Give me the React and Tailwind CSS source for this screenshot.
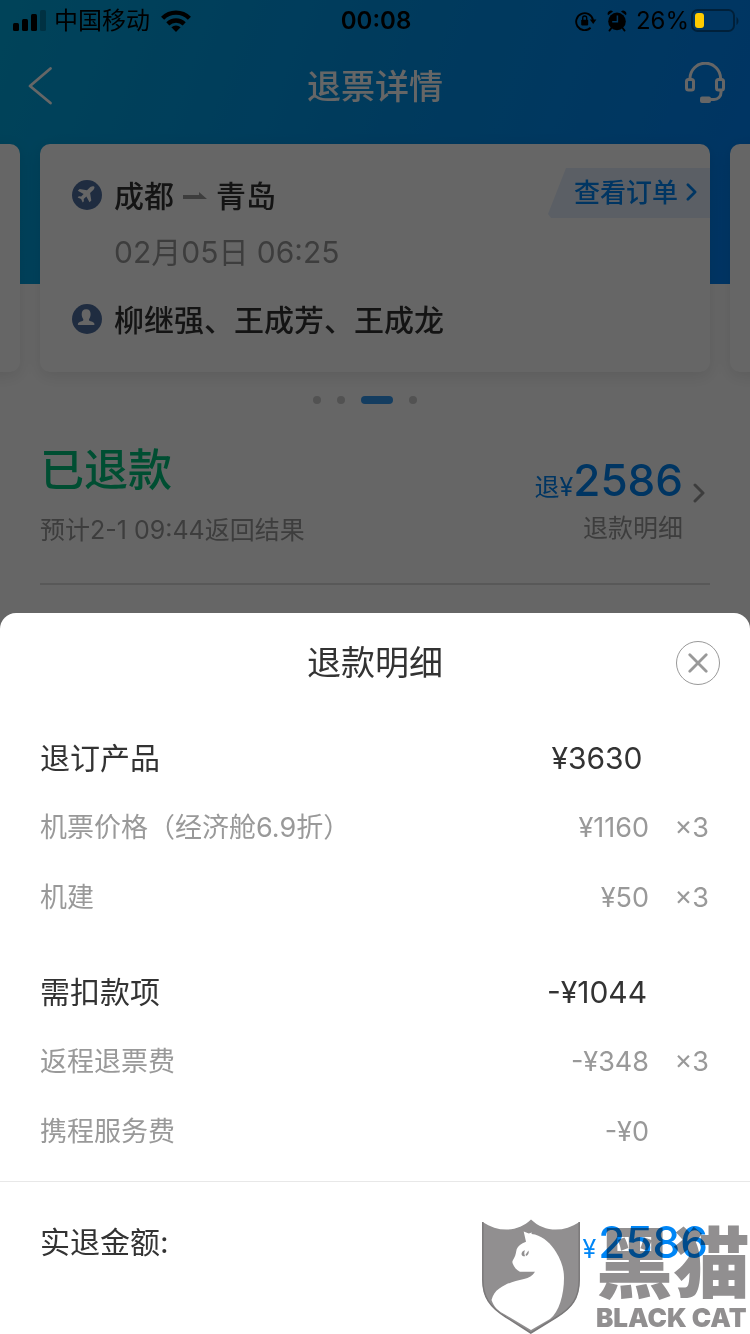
import React from "react";

const sections = [
  {
    name: "退订产品",
    amount: "¥3630",
    items: [
      { name: "机票价格（经济舱6.9折）", amount: "¥1160", qty: "×3" },
      { name: "机建", amount: "¥50", qty: "×3" },
    ],
  },
  {
    name: "需扣款项",
    amount: "-¥1044",
    items: [
      { name: "返程退票费", amount: "-¥348", qty: "×3" },
      { name: "携程服务费", amount: "-¥0", qty: "" },
    ],
  },
];

function Signal() {
  return (
    <svg viewBox="0 0 34 22" className="h-[22px] w-[34px]" aria-hidden="true">
      <rect x="0" y="13" width="6" height="8" rx="1.5" />
      <rect x="9" y="9" width="6" height="12" rx="1.5" />
      <rect x="18" y="4" width="6" height="17" rx="1.5" />
      <rect x="27" y="0" width="6" height="21" rx="1.5" opacity="0.25" />
    </svg>
  );
}

function Wifi() {
  return (
    <svg viewBox="0 0 30 22" className="h-[22px] w-[30px]" aria-hidden="true">
      <g fill="none" stroke="currentColor" strokeWidth="4.4">
        <path d="M1.6 8.2a19 19 0 0 1 26.800 0" />
        <path d="M6.800 13.800a11.800 11.800 0 0 1 16.400 0" />
      </g>
      <path d="M10.400 17.300a7 7 0 0 1 9.200 0L15 22z" />
    </svg>
  );
}

function RotationLock() {
  return (
    <svg viewBox="0 0 22 20" className="h-5 w-[22px]" aria-hidden="true">
      <path d="M15.6 16.8A8.5 8.5 0 1 1 18 9" fill="none" stroke="currentColor" strokeWidth="1.9" />
      <path d="M14.8 8.4h6.6L18.2 13z" />
      <rect x="6.2" y="8.8" width="7" height="5.6" rx="0.8" />
      <path d="M7.7 9V7a2 2 0 0 1 4 0v2" fill="none" stroke="currentColor" strokeWidth="1.4" />
    </svg>
  );
}

function Alarm() {
  return (
    <svg viewBox="0 0 20 22" className="h-[22px] w-5" aria-hidden="true">
      <circle cx="10" cy="11.400" r="8.800" />
      <path d="M1 5.200A3.200 3.200 0 0 1 6 1.400zM19 5.200A3.200 3.200 0 0 0 14 1.400z" />
      <path d="M4.400 18l-2 2.600M15.600 18l2 2.600" stroke="currentColor" strokeWidth="1.800" strokeLinecap="round" />
      <path d="M10.400 5.600v6.200H5.200" fill="none" stroke="#003861" strokeWidth="1.500" />
    </svg>
  );
}

function Battery() {
  return (
    <svg viewBox="0 0 48 24" className="h-6 w-12" aria-hidden="true">
      <rect x="1" y="1" width="42" height="21" rx="5.5" fill="none" stroke="#000" strokeOpacity="0.4" strokeWidth="2" />
      <path d="M45.5 8v8c2.6-1.4 2.6-6.6 0-8z" opacity="0.4" />
      <rect x="4" y="4" width="9" height="15" rx="3" fill="#ffcc00" />
    </svg>
  );
}

function StatusBar() {
  return (
    <div className="relative z-20 grid h-10 grid-cols-[1fr_auto_1fr] items-center pl-[13px] pr-[11px] pt-px text-2xl text-black">
      <div className="flex items-center">
        <Signal />
        <span className="ml-[7px] mr-[11px]">中国移动</span>
        <Wifi />
      </div>
      <span className="font-semibold">00:08</span>
      <div className="flex items-center justify-end">
        <RotationLock />
        <span className="ml-[10px] mr-[9px]">
          <Alarm />
        </span>
        <span className="mr-[2px]">26%</span>
        <Battery />
      </div>
    </div>
  );
}

function Chevron({ className }) {
  return (
    <svg viewBox="0 0 12 20" className={className} fill="none" stroke="currentColor" strokeWidth="3" strokeLinecap="round" strokeLinejoin="round" aria-hidden="true">
      <path d="M2 2l8 8-8 8" />
    </svg>
  );
}

function NavBar() {
  return (
    <header className="grid h-[94px] grid-cols-[1fr_auto_1fr] items-center px-6 text-white">
      <button type="button" aria-label="返回" className="justify-self-start pb-[2px]">
        <svg viewBox="0 0 30 40" className="h-10 w-[30px]" fill="none" stroke="currentColor" strokeWidth="2.800" strokeLinecap="round" strokeLinejoin="round">
          <path d="M26.500 2.500L6 20l20.500 17" />
        </svg>
      </button>
      <h1 className="text-[34px] font-medium leading-[48px]">退票详情</h1>
      <button type="button" aria-label="客服" className="justify-self-end pb-2">
        <svg viewBox="0 0 42 42" className="h-[42px] w-[42px]" fill="none" stroke="currentColor" strokeWidth="3">
          <path d="M6 17.500v-1a15.300 15.300 0 0 1 30.600 0v1" />
          <rect x="2.500" y="17.500" width="7" height="10.500" rx="2" />
          <rect x="32.500" y="17.500" width="7" height="10.500" rx="2" />
          <path d="M37 28v2.500a7 7 0 0 1-7 7h-4" />
          <rect x="16" y="34.500" width="11" height="6.500" rx="2" fill="currentColor" stroke="none" />
        </svg>
      </button>
    </header>
  );
}

const cardClass = "h-[228px] w-[calc(100%-80px)] shrink-0 rounded-[10px] bg-white shadow-[0_4px_16px_rgba(0,0,0,0.1)]";

function TripCard() {
  return (
    <article className={cardClass + " relative px-8 pt-6 text-[30px] text-[#333]"}>
      <div className="flex h-14 items-center gap-3">
        <svg viewBox="0 0 30 30" className="mb-[2px] h-[30px] w-[30px]" aria-hidden="true">
          <circle cx="15" cy="15" r="15" fill="#4f6fa0" />
          <path d="M22.300 6.700c-1.500-1.100-3.600-.2-5 1.200l-2.300 2.300-7.400-1.300-1.800 1.800 5.800 3.200-2.400 2.700-2.400-.3-1.100 1.200 3.400 1.600 1.600 3.300 1.200-1.100-.2-2.400 2.700-2.300 3.100 5.600 1.800-1.800-1.200-7.300 2.300-2.300c1.300-1.300 2.600-2.900 1.900-4.400z" fill="#fff" />
        </svg>
        <span className="flex items-center gap-[9px] font-medium">
          成都
          <svg viewBox="0 0 24 8" className="h-2 w-6" fill="#999" role="img" aria-label="至">
            <path d="M0 3h16V0l8 7H0z" />
          </svg>
          青岛
        </span>
      </div>
      <p className="flex h-14 items-center pl-[42px] text-[#999]">02月05日 06:25</p>
      <div className="mt-3 flex h-14 items-center gap-3">
        <svg viewBox="0 0 30 30" className="mb-[2px] h-[30px] w-[30px]" aria-hidden="true">
          <circle cx="15" cy="15" r="15" fill="#4f6fa0" />
          <path d="M14.200 5.200c3 0 4.400 2 4.400 4.800 0 2.200-.6 3.700-1.500 4.900-.5 1.500.3 2 1.600 2.400 2.400.6 3.800 1.400 3.800 3.300 0 .3-.2.500-.6.500H6.400c-.4 0-.6-.2-.6-.5 0-1.900 1.500-2.700 3.900-3.300 1.300-.4 2-1 1.500-2.400-.9-1.200-1.500-2.700-1.500-4.900 0-2.800 1.500-4.800 4.500-4.800z" fill="#fff" />
        </svg>
        <span className="font-medium">柳继强、王成芳、王成龙</span>
      </div>
      <button type="button" className="absolute right-0 top-6 flex h-[50px] items-center gap-2 bg-[#e4eefc] pb-[2px] pl-[26px] pr-[13px] text-[26px] font-medium text-[#0086f6] [clip-path:polygon(18px_0,100%_0,100%_100%,3px_100%,0_46px)]">
        查看订单
        <Chevron className="h-[18px] w-[11px]" />
      </button>
    </article>
  );
}

function Carousel() {
  return (
    <section>
      <div className="flex justify-center gap-5 overflow-hidden pb-6 pt-[10px]">
        <div className={cardClass} />
        <TripCard />
        <div className={cardClass} />
      </div>
      <div className="flex justify-center gap-4 pr-5">
        <span className="h-2 w-2 rounded-full bg-[#ccc]" />
        <span className="h-2 w-2 rounded-full bg-[#ccc]" />
        <span className="h-2 w-8 rounded-full bg-[#3399f0]" />
        <span className="h-2 w-2 rounded-full bg-[#ccc]" />
      </div>
    </section>
  );
}

function RefundSummary() {
  return (
    <section className="mx-10 flex justify-between border-b-2 border-[#ddd] pb-[35px] pt-[34px]">
      <div>
        <h2 className="text-[44px] font-medium leading-[64px] text-[#00c37d]">已退款</h2>
        <p className="mt-[10px] text-[25px] leading-9 text-[#999]">预计2-1 09:44返回结果</p>
      </div>
      <button type="button" className="flex items-center gap-[10px] pr-[5px] text-right">
        <span>
          <span className="flex items-baseline justify-end pb-[2px] pt-3 text-[25px] leading-none text-[#0086f6]">
            退¥<span className="text-[44px] font-medium leading-[56px]">2586</span>
          </span>
          <span className="block text-[25px] leading-9 text-[#999]">退款明细</span>
        </span>
        <Chevron className="h-5 w-3 text-[#999]" />
      </button>
    </section>
  );
}

function RefundSheet() {
  return (
    <section role="dialog" aria-label="退款明细" className="absolute inset-x-0 bottom-0 z-20 rounded-t-2xl bg-white text-[#333]">
      <div className="grid h-[100px] grid-cols-[1fr_auto_1fr] items-center px-[30px]">
        <h2 className="col-start-2 text-[34px] leading-[48px]">退款明细</h2>
        <button type="button" aria-label="关闭" className="grid h-11 w-11 place-items-center justify-self-end rounded-full border border-[#999] text-[#999]">
          <svg viewBox="0 0 20 20" className="h-5 w-5" fill="none" stroke="currentColor" strokeWidth="2.800" strokeLinecap="round">
            <path d="M1.800 1.800l16.400 16.400M18.200 1.800L1.800 18.200" />
          </svg>
        </button>
      </div>
      <div className="px-10 pb-[14px] pt-[10px]">
        <table className="w-full table-fixed border-collapse">
          <colgroup>
            <col />
            <col className="w-[104px]" />
            <col className="w-[61px]" />
          </colgroup>
          {sections.map((section, i) => (
            <tbody key={section.name}>
              {i > 0 && (
                <tr className="h-6" aria-hidden="true">
                  <td colSpan={3} />
                </tr>
              )}
              <tr className="h-[70px] text-[30px] leading-10">
                <th scope="row" className="p-0 text-left font-normal">{section.name}</th>
                <td className="whitespace-nowrap p-0 text-center">{section.amount}</td>
                <td />
              </tr>
              {section.items.map((item) => (
                <tr key={item.name} className="h-[70px] text-[27px] leading-10 text-[#999]">
                  <th scope="row" className="p-0 text-left font-normal">{item.name}</th>
                  <td className="whitespace-nowrap p-0 text-right">{item.amount}</td>
                  <td className="p-0 pr-px text-right">{item.qty}</td>
                </tr>
              ))}
            </tbody>
          ))}
        </table>
      </div>
      <div className="flex h-[153px] items-start justify-between border-t border-[#e8e8e8] px-10 pt-[30px]">
        <span className="text-[30px] leading-[60px]">实退金额:</span>
        <span className="flex items-baseline gap-[2px] pr-[2px] text-[25px] leading-none text-[#0086f6]">
          ¥<span className="text-[44px] font-medium leading-[60px]">2586</span>
        </span>
      </div>
    </section>
  );
}

function Watermark() {
  return (
    <div className="pointer-events-none absolute bottom-0 right-0 z-30 flex items-end gap-4 text-[#918f90] mix-blend-multiply">
      <svg viewBox="0 0 98 115" className="h-[115px] w-[98px]" aria-hidden="true">
        <path
          fillRule="evenodd"
          d="M.5 3C17 14 36 13 49 .5 62 13 81 14 97.500 3v58c0 22-12 31-24 38L49 114 25 98C9 88 .5 80 .5 61zM9.500 81C12 88 16 92 22 95l27 16 19-11C77 93 82 76 82 59c0-10-3-18-8-26C69 25 62 18 53 15.500L49.500 15l.3-1.500-3 1-5.100-2L44 22.700c-5 2-8 4-9.300 7.500-.9 3-.6 5.500-2.700 9-1.500 2.300-1.900 3.500-1.400 5 1.500 4 4 7 7.400 8.500H53c-2.500 4-6 6-11 7.300-9 2-17 4-24.700 9.500C13 72.500 11 76 9.500 81z"
          fill="currentColor"
        />
        <path d="M.8 3v58c0 17 7 27 23 37l25 16 26-16c15-9 22.400-19 22.400-37V3" fill="none" stroke="#7a7879" strokeWidth="1.500" />
        <path d="M39.500 35c0-2 1.500-3.500 3.500-3.800-1 1.800-1 3.800.2 6-2 .3-3.500-.4-3.700-2.200z" fill="currentColor" />
        <path d="M43.500 35.800l3-4.300c.7 2.300-.2 4.300-2.300 5.600z" fill="currentColor" />
      </svg>
      <div className="pb-[2px]">
        <div className="text-[77px] font-black leading-[80px]">黑猫</div>
        <div className="whitespace-nowrap text-[26px] font-black leading-7">BLACK CAT</div>
      </div>
    </div>
  );
}

export default function App() {
  return (
    <main className="relative isolate min-h-screen overflow-hidden bg-white font-['Inter','Noto_Sans_CJK_SC',sans-serif]">
      <div className="bg-[linear-gradient(110deg,#00a8de_0%,#0092e8_50%,#0083fa_100%)] bg-[length:100%_284px] bg-no-repeat">
        <StatusBar />
        <NavBar />
        <Carousel />
        <RefundSummary />
      </div>
      <div className="absolute inset-0 z-10 bg-black/60" />
      <RefundSheet />
      <Watermark />
    </main>
  );
}
